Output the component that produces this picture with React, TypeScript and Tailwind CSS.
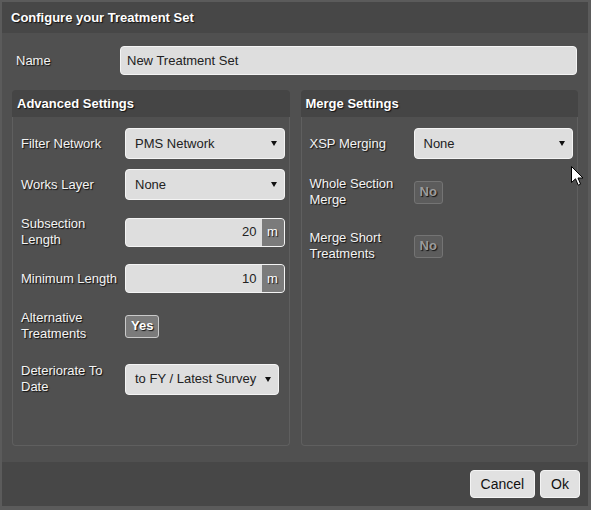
import type { ReactNode } from "react";

const shadow = "[text-shadow:1px_1px_1px_#111]";

function Arrow() {
  return (
    <svg width="6" height="5" viewBox="0 0 6 5" className="shrink-0">
      <polygon points="0,0 6,0 3,5" fill="#111" />
    </svg>
  );
}

function SelectBox({ value, className = "" }: { value: string; className?: string }) {
  return (
    <div
      className={`flex h-[31px] items-center justify-between rounded-[4px] border border-[#f4f4f4] bg-[#dedede] pl-[9px] pr-[7px] text-[13px] text-[#222] ${className}`}
    >
      <span>{value}</span>
      <Arrow />
    </div>
  );
}

function UnitInput({ value }: { value: string }) {
  return (
    <div className="flex h-[29px] flex-1 overflow-hidden rounded-[4px] border border-[#f4f4f4] bg-[#dedede] text-[13px]">
      <div className="flex flex-1 items-center justify-end pr-[5px] text-[#222]">{value}</div>
      <div className={`flex w-[22px] items-center justify-center bg-[#7b7b7b] text-white ${shadow}`}>m</div>
    </div>
  );
}

function Toggle({ on }: { on: boolean }) {
  return on ? (
    <div
      className={`flex h-[23px] items-center rounded-[3px] border border-[#c9c9c9] bg-[#7b7b7b] px-[5px] text-[13px] font-bold text-white ${shadow}`}
    >
      Yes
    </div>
  ) : (
    <div
      className={`flex h-[23px] items-center rounded-[3px] border border-[#747474] bg-[#5c5c5c] px-[5px] text-[13px] font-bold text-[#9c9c9c] ${shadow}`}
    >
      No
    </div>
  );
}

function Row({ label, mt, h, children }: { label: string; mt: string; h: string; children: ReactNode }) {
  return (
    <div className={`flex items-center pl-[8px] pr-[4px] ${mt} ${h}`}>
      <div className={`w-[104px] shrink-0 text-[13px] leading-4 text-[#f4f4f4] ${shadow}`}>{label}</div>
      {children}
    </div>
  );
}

function Panel({ title, children }: { title: string; children: ReactNode }) {
  return (
    <div className="flex flex-col rounded-[4px]">
      <div
        className={`flex h-[27px] shrink-0 items-center rounded-t-[4px] bg-[#454545] pl-[5px] text-[13px] font-bold text-white ${shadow}`}
      >
        {title}
      </div>
      <div className="flex-1 rounded-b-[4px] border-x border-b border-[#5f5f5f]">{children}</div>
    </div>
  );
}

export default function App() {
  return (
    <div className="h-[510px] w-[591px] bg-[#5b5b5b] pb-[4px] pl-[2px] pr-[3px] pt-[2px] font-['Liberation_Sans',Arial,sans-serif]">
      <div className="relative flex h-full flex-col">
        <div className={`flex h-[31px] shrink-0 items-center bg-[#474747] pl-[9px] text-[13px] font-bold text-white ${shadow}`}>
          Configure your Treatment Set
        </div>

        <div className="flex flex-1 flex-col bg-[#505050]">
          <div className="mt-[13px] flex items-center pl-[14px] pr-[11px]">
            <div className={`w-[104px] shrink-0 text-[13px] text-[#f4f4f4] ${shadow}`}>Name</div>
            <div className="flex h-[29px] flex-1 items-center rounded-[4px] border border-[#f4f4f4] bg-[#dedede] pl-[6px] text-[13px] text-[#222]">
              New Treatment Set
            </div>
          </div>

          <div className="mb-[16px] mt-[15px] grid flex-1 grid-cols-2 gap-x-[11px] px-[10px]">
            <Panel title="Advanced Settings">
              <Row label="Filter Network" mt="mt-[11px]" h="h-[31px]">
                <SelectBox value="PMS Network" className="flex-1" />
              </Row>
              <Row label="Works Layer" mt="mt-[10px]" h="h-[31px]">
                <SelectBox value="None" className="flex-1" />
              </Row>
              <Row label="Subsection Length" mt="mt-[16px]" h="h-[32px]">
                <UnitInput value="20" />
              </Row>
              <Row label="Minimum Length" mt="mt-[15px]" h="h-[31px]">
                <UnitInput value="10" />
              </Row>
              <Row label="Alternative Treatments" mt="mt-[16px]" h="h-[32px]">
                <Toggle on />
              </Row>
              <Row label="Deteriorate To Date" mt="mt-[21px]" h="h-[32px]">
                <SelectBox value="to FY / Latest Survey" className="w-[154px]" />
              </Row>
            </Panel>

            <Panel title="Merge Settings">
              <Row label="XSP Merging" mt="mt-[11px]" h="h-[31px]">
                <SelectBox value="None" className="flex-1" />
              </Row>
              <Row label="Whole Section Merge" mt="mt-[17px]" h="h-[32px]">
                <Toggle on={false} />
              </Row>
              <Row label="Merge Short Treatments" mt="mt-[22px]" h="h-[32px]">
                <Toggle on={false} />
              </Row>
            </Panel>
          </div>
        </div>

        <div className="flex h-[44px] shrink-0 items-start justify-end gap-[5px] bg-[#474747] pr-[8px] pt-[8px]">
          <button className="h-[28px] rounded-[4px] border border-[#f4f4f4] bg-[#e1e1e1] px-[10px] text-[14px] text-[#111]">
            Cancel
          </button>
          <button className="h-[28px] rounded-[4px] border border-[#f4f4f4] bg-[#e1e1e1] px-[10px] text-[14px] text-[#111]">
            Ok
          </button>
        </div>

        <svg
          width="13"
          height="21"
          viewBox="0 0 13 21"
          className="pointer-events-none absolute left-[569px] top-[164px]"
        >
          <path
            d="M0.5 0.5 L0.5 16.5 L4.5 12.8 L7.2 19.2 L9.6 18.2 L7 12 L12 12 Z"
            fill="#fff"
            stroke="#000"
            strokeWidth="1"
            strokeLinejoin="round"
          />
        </svg>
      </div>
    </div>
  );
}
